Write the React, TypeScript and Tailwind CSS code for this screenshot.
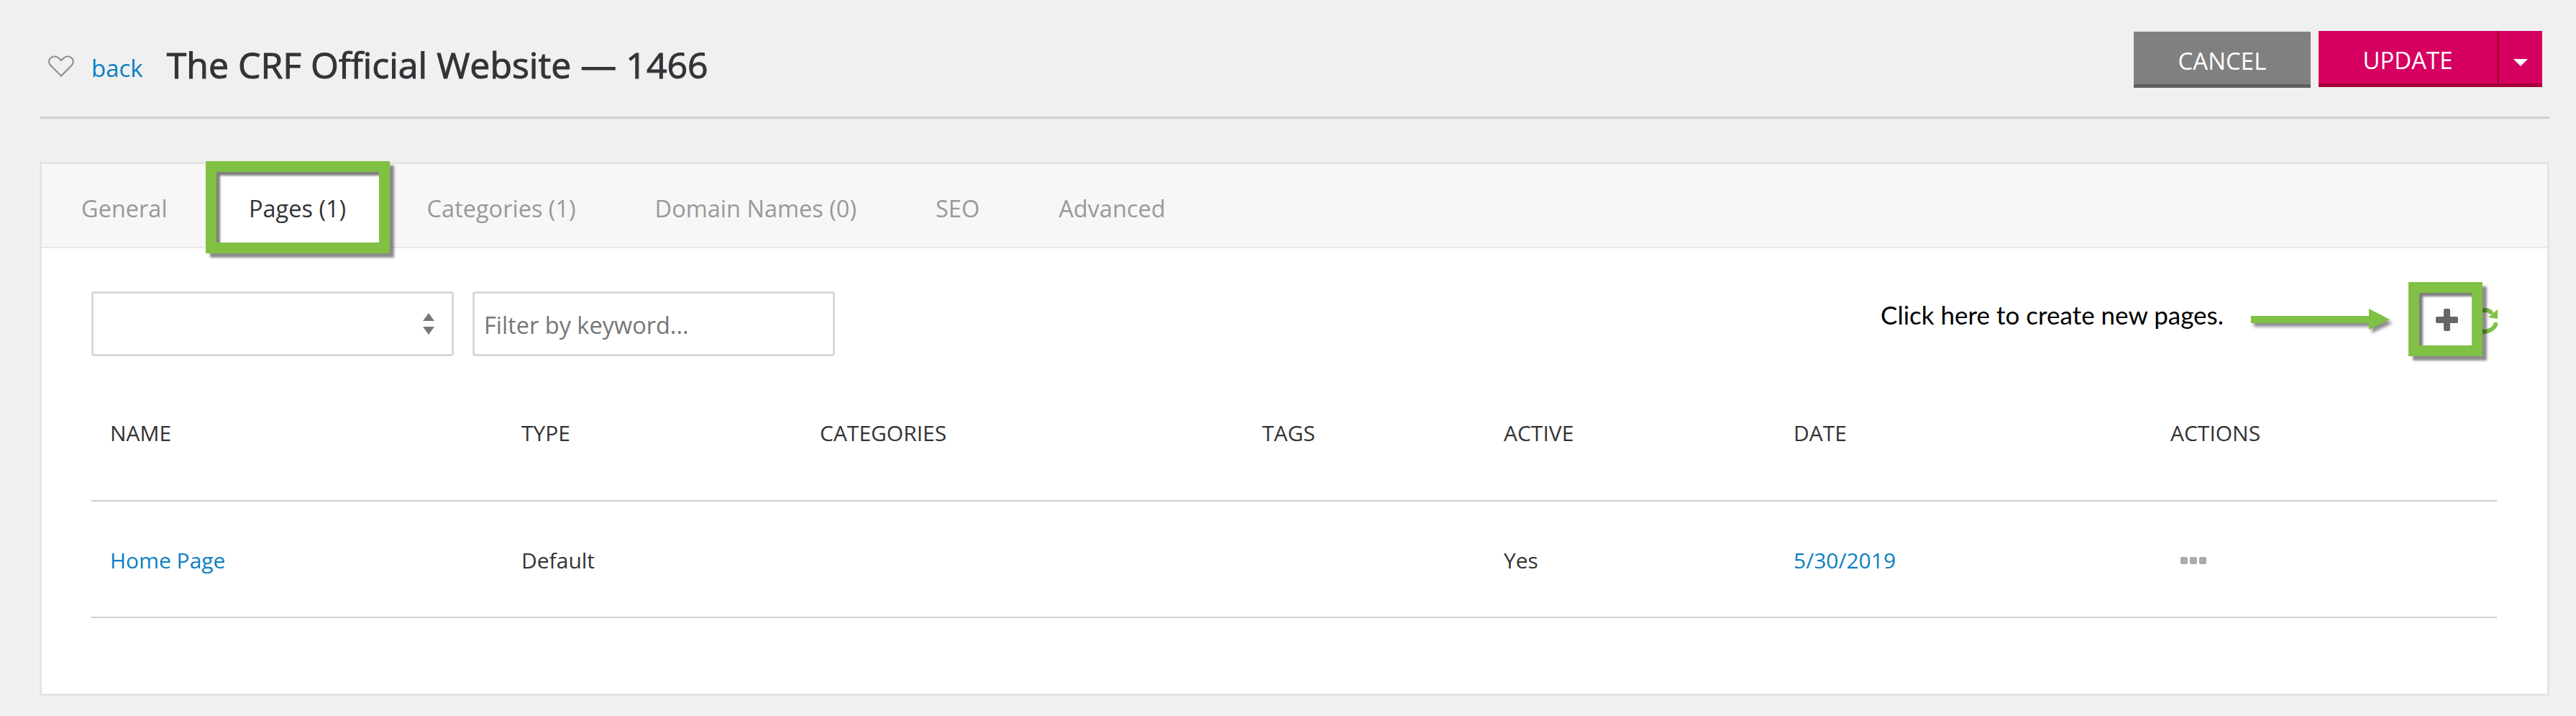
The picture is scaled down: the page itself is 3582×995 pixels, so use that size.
const tabClass = "text-[32.5px] leading-none text-[#999999] whitespace-nowrap";
const cols = "grid grid-cols-[572px_415px_615px_336px_403px_524px_480px] items-center";

function GreenBox({ className, children }: { className: string; children: React.ReactNode }) {
  return (
    <div className={`relative flex items-center justify-center bg-white border-[15px] border-[#80c144] shadow-[6px_6px_3px_rgba(0,0,0,0.45),inset_5px_5px_3px_rgba(0,0,0,0.5)] ${className}`}>
      {children}
    </div>
  );
}

export default function App() {
  return (
    <div className="w-[3582px] h-[995px] bg-[#f0f0f0] pl-[55px] pr-[37px] font-['Open_Sans',sans-serif] overflow-hidden">
      <header className="h-[165px] border-b-[3px] border-[#d0d0d0] flex items-start">
        <svg className="mt-[77px] ml-[12px] w-[36px] h-[30px]" viewBox="0 0 36 30" fill="none" stroke="#8a8a8a" strokeWidth="2">
          <path d="M18 28.500L3.500 14C0 10.500 0.500 5.500 4 3 7.500 0.500 12 1 15 4L18 7 21 4C24 1 28.500 0.500 32 3 35.500 5.500 36 10.500 32.500 14Z" />
        </svg>
        <a className="ml-[24px] mt-[70px] text-[#0b80c3] text-[33px] leading-[50px]">back</a>
        <h1 className="ml-[33px] mt-[60px] text-[#333338] text-[50px] leading-[60px] [-webkit-text-stroke:1px_#333338] whitespace-nowrap">The CRF Official Website — 1466</h1>
        <div className="ml-auto mr-[10px] mt-[43px] flex items-start gap-[11px] text-white text-[33px]">
          <button className="mt-[1px] w-[246px] h-[78px] pt-[9px] bg-[#808080] border-b-[5px] border-[#5f5f5f] flex items-center justify-center">CANCEL</button>
          <div className="flex h-[78px] bg-[#d50060] border-b-[5px] border-[#a80038]">
            <button className="w-[248px] pt-[9px] flex items-center justify-center">UPDATE</button>
            <button className="w-[63px] border-l-[3px] border-[#a80038] flex items-center justify-center">
              <span className="mt-[15px] w-0 h-0 border-x-[10px] border-x-transparent border-t-[10px] border-t-white" />
            </button>
          </div>
        </div>
      </header>

      <main className="mt-[60px] h-[742px] bg-white border-[3px] border-[#e4e4e4]">
        <nav className="relative z-10 h-[117px] pt-[10px] bg-[#f7f7f7] border-b-2 border-[#e8e8e8] flex items-center">
          <span className={`${tabClass} ml-[55px]`}>General</span>
          <GreenBox className="ml-[53px] self-start -mt-[14px] w-[256px] h-[128px] pt-[4px] shrink-0">
            <span className="text-[32.5px] leading-none text-[#333333] whitespace-nowrap">Pages (1)</span>
          </GreenBox>
          <span className={`${tabClass} ml-[52px]`}>Categories (1)</span>
          <span className={`${tabClass} ml-[110px]`}>Domain Names (0)</span>
          <span className={`${tabClass} ml-[110px]`}>SEO</span>
          <span className={`${tabClass} ml-[110px]`}>Advanced</span>
        </nav>

        <section className="pt-[60px] pl-[69px] pr-[70px]">
          <div className="flex items-start h-[90px]">
            <div className="w-[504px] h-[90px] bg-white border-[3px] border-[#d8d8d8] rounded-[4px] flex flex-col items-end justify-center gap-[8px] pr-[24px]">
              <span className="w-0 h-0 border-x-[8px] border-x-transparent border-b-[11px] border-b-[#777777]" />
              <span className="w-0 h-0 border-x-[8px] border-x-transparent border-t-[11px] border-t-[#777777]" />
            </div>
            <div className="ml-[26px] w-[504px] h-[90px] bg-white border-[3px] border-[#d8d8d8] rounded-[4px] flex items-center pl-[13px] pt-[4px]">
              <span className="text-[32.5px] text-[#777777]">Filter by keyword...</span>
            </div>
            <span className="ml-auto mt-[8px] text-[35px] leading-[48px] text-black font-['Lato',sans-serif] whitespace-nowrap">Click here to create new pages.</span>
            <svg className="ml-[38px] mt-[24px] w-[200px] h-[40px] drop-shadow-[4px_5px_2px_rgba(0,0,0,0.45)]" viewBox="0 0 200 40">
              <path d="M0 10H164V0L193 15 164 29V20H0Z" fill="#80c144" />
            </svg>
            <GreenBox className="ml-[19px] -mt-[13px] w-[103px] h-[103px] pl-[4px] pt-[2px] shrink-0">
              <svg width="31" height="31" viewBox="0 0 31 31" fill="#666666">
                <path d="M11 2a2 2 0 0 1 2-2h5a2 2 0 0 1 2 2v9h9a2 2 0 0 1 2 2v5a2 2 0 0 1-2 2h-9v9a2 2 0 0 1-2 2h-5a2 2 0 0 1-2-2v-9H2a2 2 0 0 1-2-2v-5a2 2 0 0 1 2-2h9Z" />
              </svg>
            </GreenBox>
            <svg className="mt-[22px] -mr-[1px] w-[21px] h-[37px] shrink-0" viewBox="0 0 21 37" fill="none">
              <path d="M0 5C5 3 10 4 13 9" stroke="#80c144" strokeWidth="6" />
              <path d="M8 14L21 16V3Z" fill="#80c144" />
              <path d="M19 21C18 29 10 34 0 34" stroke="#80c144" strokeWidth="6" />
            </svg>
          </div>

          <div className={`${cols} mt-[60px] h-[142px] border-b-2 border-[#d0d0d0] text-[30px] text-[#333333]`}>
            {["NAME", "TYPE", "CATEGORIES", "TAGS", "ACTIVE", "DATE", "ACTIONS"].map((h) => (
              <div key={h} className="pl-[26px] -mt-[48px]">{h}</div>
            ))}
          </div>
          <div className={`${cols} h-[162px] pt-[3px] border-b-2 border-[#d0d0d0] text-[30px] text-[#333333]`}>
            <a className="pl-[26px] text-[#0b80c3]">Home Page</a>
            <div className="pl-[26px]">Default</div>
            <div />
            <div />
            <div className="pl-[26px]">Yes</div>
            <a className="pl-[26px] text-[#0b80c3]">5/30/2019</a>
            <div className="pl-[40px] flex gap-[3px]">
              <span className="w-[10px] h-[10px] rounded-[2px] bg-[#aaaaaa]" />
              <span className="w-[10px] h-[10px] rounded-[2px] bg-[#aaaaaa]" />
              <span className="w-[10px] h-[10px] rounded-[2px] bg-[#aaaaaa]" />
            </div>
          </div>
        </section>
      </main>
    </div>
  );
}
